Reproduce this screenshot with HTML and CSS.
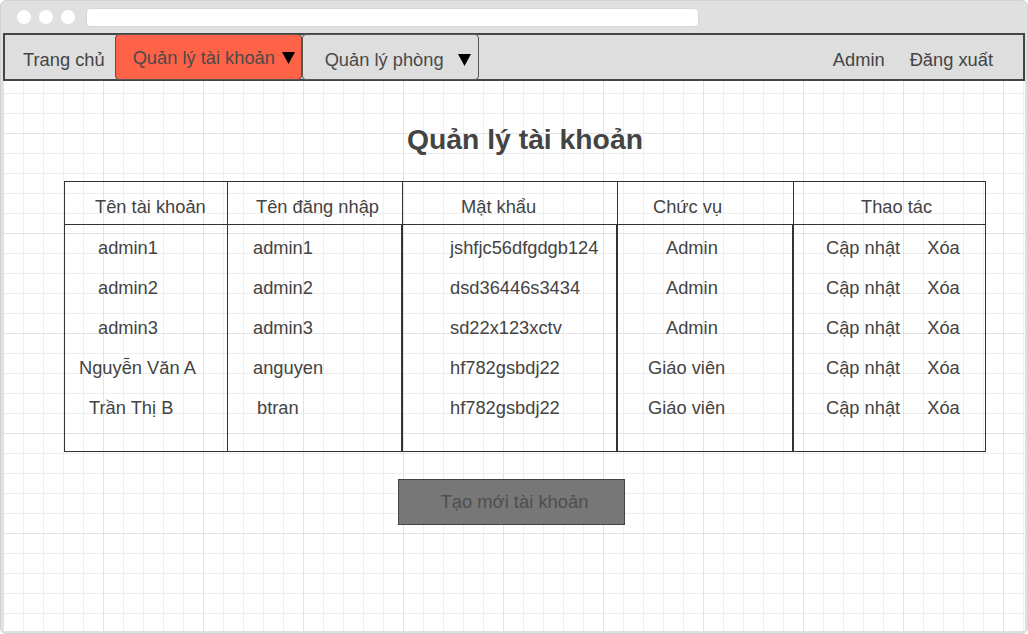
FILE: index.html
```html
<!DOCTYPE html>
<html lang="vi">
<head>
<meta charset="utf-8">
<title>Quản lý tài khoản</title>
<link rel="stylesheet" href="styles.css">
</head>
<body>
<div class="window">
  <div class="titlebar">
    <span class="dot"></span><span class="dot"></span><span class="dot"></span>
    <div class="address"></div>
  </div>
  <div class="viewport">
    <nav class="nav">
      <span class="nav-link home">Trang chủ</span>
      <div class="tab tab-active">
        <span class="tab-label">Quản lý tài khoản</span>
        <svg class="caret" width="13" height="12" viewBox="0 0 13 12"><polygon points="0,0 13,0 6.5,12" fill="#000"/></svg>
      </div>
      <div class="tab tab-room">
        <span class="tab-label">Quản lý phòng</span>
        <svg class="caret" width="13" height="12" viewBox="0 0 13 12"><polygon points="0,0 13,0 6.5,12" fill="#000"/></svg>
      </div>
      <div class="nav-right">
        <span class="nav-link">Admin</span>
        <span class="nav-link">Đăng xuất</span>
      </div>
    </nav>

    <main class="content">
      <h1 class="title">Quản lý tài khoản</h1>
      <div class="table">
        <div class="col col-name">
          <div class="th">Tên tài khoản</div>
          <div class="tbody">
            <div class="td">admin1</div>
            <div class="td">admin2</div>
            <div class="td">admin3</div>
            <div class="td shift-a">Nguyễn Văn A</div>
            <div class="td shift-b">Trần Thị B</div>
          </div>
        </div>
        <div class="col col-login">
          <div class="th">Tên đăng nhập</div>
          <div class="tbody">
            <div class="td">admin1</div>
            <div class="td">admin2</div>
            <div class="td">admin3</div>
            <div class="td">anguyen</div>
            <div class="td shift-c">btran</div>
          </div>
        </div>
        <div class="col col-pass">
          <div class="th">Mật khẩu</div>
          <div class="tbody">
            <div class="td">jshfjc56dfgdgb124</div>
            <div class="td">dsd36446s3434</div>
            <div class="td">sd22x123xctv</div>
            <div class="td">hf782gsbdj22</div>
            <div class="td">hf782gsbdj22</div>
          </div>
        </div>
        <div class="col col-role">
          <div class="th">Chức vụ</div>
          <div class="tbody">
            <div class="td">Admin</div>
            <div class="td">Admin</div>
            <div class="td">Admin</div>
            <div class="td shift-d">Giáo viên</div>
            <div class="td shift-d">Giáo viên</div>
          </div>
        </div>
        <div class="col col-act">
          <div class="th">Thao tác</div>
          <div class="tbody">
            <div class="td actions"><span>Cập nhật</span><span>Xóa</span></div>
            <div class="td actions"><span>Cập nhật</span><span>Xóa</span></div>
            <div class="td actions"><span>Cập nhật</span><span>Xóa</span></div>
            <div class="td actions"><span>Cập nhật</span><span>Xóa</span></div>
            <div class="td actions"><span>Cập nhật</span><span>Xóa</span></div>
          </div>
        </div>
      </div>
      <button class="create-btn" type="button">Tạo mới tài khoản</button>
    </main>
  </div>
</div>
</body>
</html>
```

FILE: styles.css
```css
html, body {
  margin: 0;
  padding: 0;
  background: #ffffff;
}

body {
  font-family: "Liberation Sans", Arial, sans-serif;
  color: #444;
}

.window {
  width: 1028px;
  height: 634px;
  box-sizing: border-box;
  background: #e0e0e0;
  border: 1px solid #d2d2d2;
  border-radius: 6px;
  padding: 0 2px 2px 2px;
  display: flex;
  flex-direction: column;
}

.titlebar {
  height: 32px;
  flex: none;
  display: flex;
  align-items: center;
  padding-left: 14px;
  gap: 8px;
}

.dot {
  width: 14px;
  height: 14px;
  border-radius: 50%;
  background: #ffffff;
  flex: none;
}

.address {
  margin-left: 3px;
  width: 613px;
  height: 19px;
  background: #ffffff;
  border: 1px solid #d6d6d6;
  box-sizing: border-box;
  border-radius: 4px;
}

.viewport {
  flex: 1;
  background-color: #ffffff;
  background-image:
    linear-gradient(to right, #e3e3e3 1px, transparent 1px),
    linear-gradient(to bottom, #e3e3e3 1px, transparent 1px),
    linear-gradient(to right, #eeeeee 1px, transparent 1px),
    linear-gradient(to bottom, #eeeeee 1px, transparent 1px);
  background-size: 100px 100px, 100px 100px, 20px 20px, 20px 20px;
  background-position: 0 0;
  display: flex;
  flex-direction: column;
}

/* ---------- nav ---------- */
.nav {
  height: 48px;
  flex: none;
  box-sizing: border-box;
  border: 2px solid #444;
  background: #dedede;
  display: flex;
  align-items: stretch;
  font-size: 18.3px;
}

.nav-link {
  display: flex;
  align-items: center;
  color: #444;
  padding-top: 5px;
}

.home {
  padding-left: 18px;
  padding-right: 10px;
}

.tab {
  display: flex;
  align-items: center;
  box-sizing: border-box;
  border: 1px solid #555;
  border-radius: 4px;
  margin-top: -1px;
  margin-bottom: -1px;
}

.tab-active {
  width: 187px;
  background: #ff6347;
  padding-left: 17px;
  padding-right: 6px;
  padding-top: 2px;
}

.tab-room {
  width: 177px;
  background: #dedede;
  padding-left: 22px;
  padding-right: 7px;
  padding-top: 5px;
}

.tab-label {
  color: #4a4a4a;
}

.caret {
  margin-left: auto;
  flex: none;
}

.nav-right {
  margin-left: auto;
  display: flex;
  gap: 25px;
  padding-right: 30px;
}

/* ---------- content ---------- */
.content {
  margin-left: 61px;
  width: 922px;
}

.title {
  margin: 41px 0 25px 0;
  font-size: 28.3px;
  line-height: 34px;
  font-weight: bold;
  text-align: center;
  color: #444;
}

.table {
  display: flex;
  height: 271px;
  box-sizing: border-box;
  border: 1px solid #333;
  font-size: 18.3px;
}

.col {
  display: flex;
  flex-direction: column;
  box-sizing: border-box;
}

.col-name  { width: 163px; }
.col-login { width: 175px; }
.col-pass  { width: 215px; }
.col-role  { width: 176px; }
.col-act   { flex: 1; }

.th {
  height: 43px;
  box-sizing: border-box;
  border-bottom: 1px solid #333;
  border-right: 1px solid #333;
  padding-top: 14px;
  line-height: 21px;
  color: #444;
}

.col-act .th { border-right: none; }

.tbody {
  flex: 1;
  box-sizing: border-box;
  border-right: 1px solid #333;
  padding-top: 3px;
}

.col-login .tbody,
.col-pass .tbody,
.col-role .tbody {
  border-right: 2px solid #333;
}

.col-act .tbody { border-right: none; }

.td {
  height: 40px;
  display: flex;
  align-items: center;
  color: #444;
}

.col-name .th   { padding-left: 30px; }
.col-login .th  { padding-left: 28px; }
.col-pass .th   { padding-left: 58px; }
.col-role .th   { padding-left: 35px; }
.col-act .th    { padding-left: 67px; }

.col-name .td   { padding-left: 33px; }
.col-name .shift-a { padding-left: 14px; }
.col-name .shift-b { padding-left: 24px; }
.col-login .td  { padding-left: 25px; }
.col-login .shift-c { padding-left: 29px; }
.col-pass .td   { padding-left: 47px; }
.col-role .td   { padding-left: 48px; }
.col-role .shift-d { padding-left: 30px; }

.actions {
  padding-left: 32px;
  gap: 27px;
}

.create-btn {
  display: block;
  margin: 27px 0 0 334px;
  width: 227px;
  height: 46px;
  box-sizing: border-box;
  background: #777777;
  border: 1px solid #444;
  border-radius: 0;
  font-family: "Liberation Sans", Arial, sans-serif;
  font-size: 18.4px;
  color: #4f4f4f;
  padding: 0 0 0 6px;
}
```
